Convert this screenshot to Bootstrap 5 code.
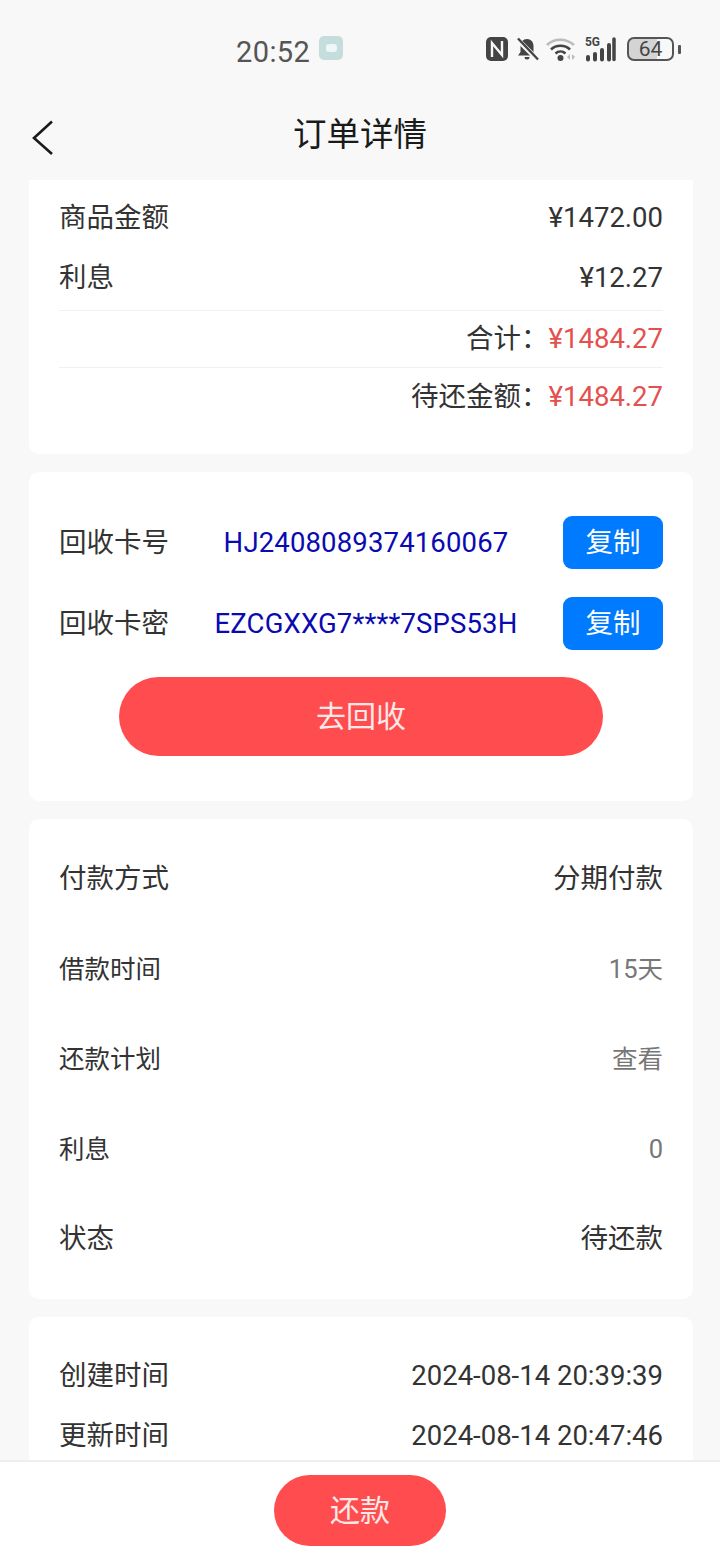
<!DOCTYPE html>
<html lang="zh">
<head>
    <meta charset="UTF-8">
    <meta name="viewport" content="width=device-width, initial-scale=1.0">
    <title>订单详情</title>
    <link href="https://cdn.jsdelivr.net/npm/bootstrap@5.3.0/dist/css/bootstrap.min.css" rel="stylesheet">
    <style>
        html, body { height: 1560px; overflow: hidden; }
        body { background: #f8f8f8; color: #333; font-family: Roboto, "Noto Sans CJK SC", sans-serif; font-size: 27.5px; }
        .status-bar { height: 100px; padding-top: 28px; }
        .clock { margin-left: 236px; font-size: 29px; line-height: 48px; color: #555; letter-spacing: .4px; }
        .app-dot { width: 24px; height: 24px; margin-left: 9px; border-radius: 5px; background: #c5dedd; }
        .app-dot i { width: 11px; height: 8px; border-radius: 3px; background: #eef6f6; display: block; }
        .status-icons { margin-left: auto; margin-right: 39px; gap: 7px; }
        .batt { width: 47px; height: 24px; border: 2px solid #555; border-radius: 7px; background: linear-gradient(90deg, #d4d4d4 64%, #f8f8f8 64%); font-size: 21px; line-height: 20px; color: #444; text-align: center; }
        .batt-tip { width: 3px; height: 9px; background: #555; border-radius: 1px; margin-left: -4px; }
        .top-bar { height: 80px; }
        .top-bar h1 { font-size: 33.5px; font-weight: 400; color: #1a1a1a; margin: 0; line-height: 70px; text-align: center; }
        .back-btn { position: absolute; left: 31px; top: 19px; }
        .sheet { background: #fff; margin: 0 27px 18px 29px; padding: 0 30px; border-radius: 10px; }
        .sheet-first { border-radius: 0 0 10px 10px; height: 274px; padding-top: 8px; }
        .line-a { height: 60px; }
        .line-b { height: 63px; padding-bottom: 3px; border-bottom: 1px solid #f1f1f1; }
        .line-c { height: 57px; justify-content: flex-end; border-bottom: 1px solid #f1f1f1; }
        .line-d { height: 76px; padding-bottom: 19px; justify-content: flex-end; }
        .price { color: #e5504f; }
        .sheet-card { height: 329px; padding-top: 44px; }
        .card-line { height: 53px; margin-bottom: 28px; }
        .card-line span:first-child { width: 110px; flex: none; }
        .card-code { flex: 1; text-align: center; color: #0a0ab0; letter-spacing: .15px; padding: 0 4px; white-space: nowrap; }
        .btn-copy { width: 100px; height: 53px; padding: 0; border: 0; border-radius: 9px; background: #007aff; color: #fff; font-size: 27.5px; }
        .btn-recycle { display: block; width: 484px; height: 79px; margin: -1px auto 0; padding: 0; border: 0; border-radius: 40px; background: #ff4d4f; color: #fde8e8; font-size: 30px; }
        .sheet-info { height: 480px; padding-top: 15px; }
        .info-line { height: 90px; font-size: 25.5px; }
        .info-big { font-size: 27.5px; }
        .muted-val { color: #777; }
        .sheet-time { height: 300px; padding-top: 29px; }
        .bottom-bar { position: fixed; left: 0; right: 0; bottom: 0; height: 100px; background: #fff; border-top: 2px solid #eee; padding-top: 13px; }
        .btn-repay { width: 172px; height: 71px; padding: 0; border: 0; border-radius: 36px; background: #ff4d4f; color: #fde8e8; font-size: 30px; }
    </style>
</head>
<body>
    <div class="status-bar d-flex align-items-start">
        <span class="clock">20:52</span>
        <span class="app-dot d-flex align-items-center justify-content-center mt-2"><i></i></span>
        <div class="status-icons d-flex align-items-center mt-2">
            <!-- nfc -->
            <svg width="22" height="24" viewBox="0 0 22 24"><rect width="22" height="24" rx="5" fill="#444"/><path d="M6 20V6l10 12V4" fill="none" stroke="#f8f8f8" stroke-width="2.4"/></svg>
            <!-- bell off -->
            <svg width="24" height="24" viewBox="0 0 24 24"><path d="M12 2c-4 0-6.500 3-6.500 7v6L3 18.500h18L18.500 15V9C18.500 5 16 2 12 2z" fill="#444"/><path d="M9.500 20h5a2.500 2.500 0 0 1-5 0z" fill="#444"/><path d="M2 2l20 20" stroke="#f8f8f8" stroke-width="5"/><path d="M3 1.500l20 21" stroke="#444" stroke-width="2.400"/></svg>
            <!-- wifi -->
            <svg width="32" height="24" viewBox="0 0 32 24" fill="none"><path d="M1 8c7-7 19-7 27 0" stroke="#bbb" stroke-width="2.500"/><path d="M5 12.500c5-5 14-5 19 0" stroke="#444" stroke-width="2.600"/><path d="M9.500 16.500c3-2.700 7-2.700 10 0" stroke="#444" stroke-width="2.600"/><circle cx="14.500" cy="21" r="3" fill="#444"/><path d="M24 17l-3 3 3 3zM26 17l3 3-3 3z" fill="#bbb"/></svg>
            <!-- 5g signal -->
            <svg width="31" height="26" viewBox="0 0 31 26"><text x="0" y="10" font-family="Roboto, sans-serif" font-size="12" font-weight="700" fill="#444" textLength="15">5G</text><g stroke="#444" stroke-width="4" stroke-linecap="round"><path d="M3 21v2.500M10 18v5.500M17 14v9.500M24 9v14.500"/><path d="M29 3v20.500" stroke-width="3.500"/></g></svg>
            <div class="d-flex align-items-center ms-1">
                <div class="batt">64</div>
                <div class="batt-tip ms-1"></div>
            </div>
        </div>
    </div>

    <div class="top-bar position-relative">
        <svg class="back-btn" width="24" height="36" viewBox="0 0 24 36" fill="none"><path d="M21 2.500 3 19l18 16" stroke="#1a1a1a" stroke-width="2.600"/></svg>
        <h1>订单详情</h1>
    </div>

    <div class="sheet sheet-first">
        <div class="line-a d-flex justify-content-between align-items-center"><span>商品金额</span><span>¥1472.00</span></div>
        <div class="line-b d-flex justify-content-between align-items-center"><span>利息</span><span>¥12.27</span></div>
        <div class="line-c d-flex align-items-center"><span>合计：</span><span class="price">¥1484.27</span></div>
        <div class="line-d d-flex align-items-center"><span>待还金额：</span><span class="price">¥1484.27</span></div>
    </div>

    <div class="sheet sheet-card">
        <div class="card-line d-flex align-items-center">
            <span>回收卡号</span>
            <span class="card-code">HJ2408089374160067</span>
            <button class="btn btn-copy" type="button">复制</button>
        </div>
        <div class="card-line d-flex align-items-center">
            <span>回收卡密</span>
            <span class="card-code">EZCGXXG7****7SPS53H</span>
            <button class="btn btn-copy" type="button">复制</button>
        </div>
        <button class="btn btn-recycle" type="button">去回收</button>
    </div>

    <div class="sheet sheet-info">
        <div class="info-line info-big d-flex justify-content-between align-items-center"><span>付款方式</span><span>分期付款</span></div>
        <div class="info-line d-flex justify-content-between align-items-center"><span>借款时间</span><span class="muted-val">15天</span></div>
        <div class="info-line d-flex justify-content-between align-items-center"><span>还款计划</span><span class="muted-val">查看</span></div>
        <div class="info-line d-flex justify-content-between align-items-center"><span>利息</span><span class="muted-val">0</span></div>
        <div class="info-line info-big d-flex justify-content-between align-items-center"><span>状态</span><span>待还款</span></div>
    </div>

    <div class="sheet sheet-time">
        <div class="line-a d-flex justify-content-between align-items-center"><span>创建时间</span><span>2024-08-14 20:39:39</span></div>
        <div class="line-a d-flex justify-content-between align-items-center"><span>更新时间</span><span>2024-08-14 20:47:46</span></div>
    </div>

    <div class="bottom-bar d-flex justify-content-center align-items-start">
        <button class="btn btn-repay" type="button">还款</button>
    </div>

    <script src="https://cdn.jsdelivr.net/npm/bootstrap@5.3.0/dist/js/bootstrap.bundle.min.js"></script>
</body>
</html>
